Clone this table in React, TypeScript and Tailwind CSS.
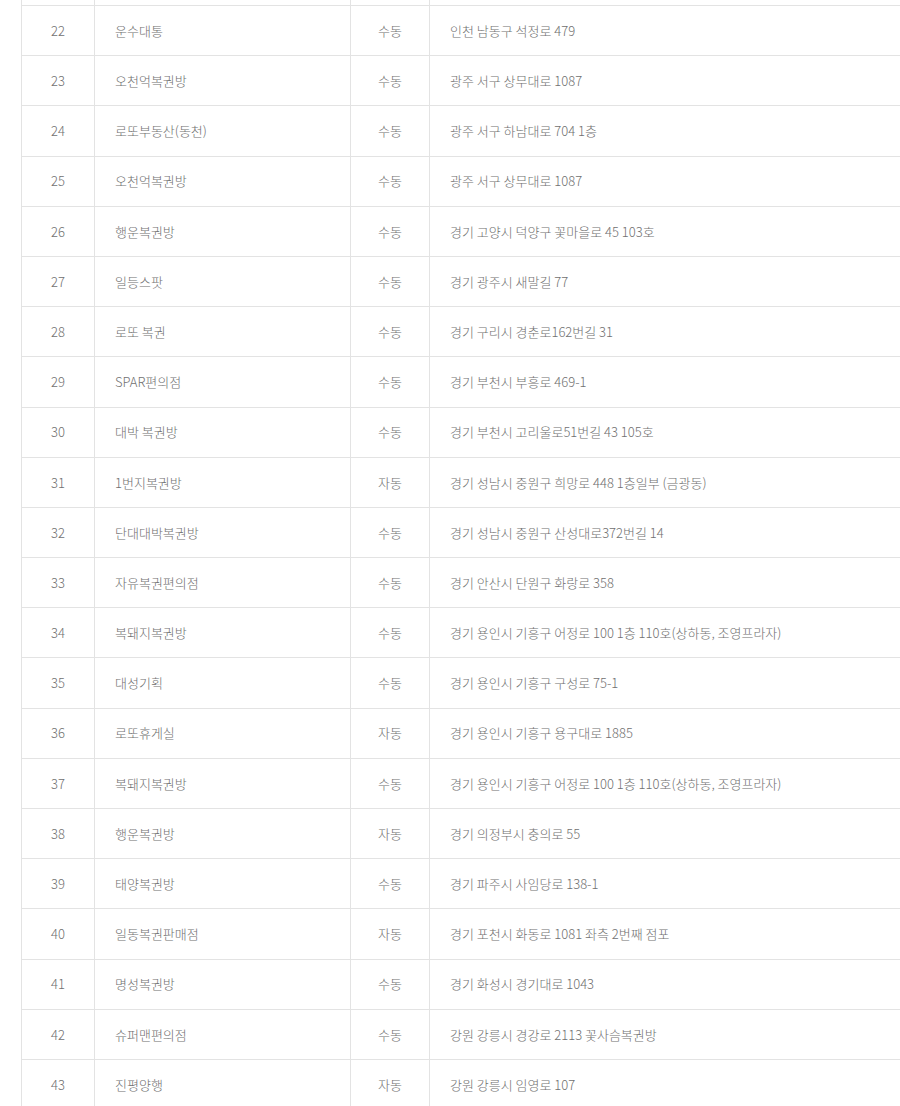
const rows: [number, string, string, string][] = [
  [22, "운수대통", "수동", "인천 남동구 석정로 479"],
  [23, "오천억복권방", "수동", "광주 서구 상무대로 1087"],
  [24, "로또부동산(동천)", "수동", "광주 서구 하남대로 704 1층"],
  [25, "오천억복권방", "수동", "광주 서구 상무대로 1087"],
  [26, "행운복권방", "수동", "경기 고양시 덕양구 꽃마을로 45 103호"],
  [27, "일등스팟", "수동", "경기 광주시 새말길 77"],
  [28, "로또 복권", "수동", "경기 구리시 경춘로162번길 31"],
  [29, "SPAR편의점", "수동", "경기 부천시 부흥로 469-1"],
  [30, "대박 복권방", "수동", "경기 부천시 고리울로51번길 43 105호"],
  [31, "1번지복권방", "자동", "경기 성남시 중원구 희망로 448 1층일부 (금광동)"],
  [32, "단대대박복권방", "수동", "경기 성남시 중원구 산성대로372번길 14"],
  [33, "자유복권편의점", "수동", "경기 안산시 단원구 화랑로 358"],
  [34, "복돼지복권방", "수동", "경기 용인시 기흥구 어정로 100 1층 110호(상하동, 조영프라자)"],
  [35, "대성기획", "수동", "경기 용인시 기흥구 구성로 75-1"],
  [36, "로또휴게실", "자동", "경기 용인시 기흥구 용구대로 1885"],
  [37, "복돼지복권방", "수동", "경기 용인시 기흥구 어정로 100 1층 110호(상하동, 조영프라자)"],
  [38, "행운복권방", "자동", "경기 의정부시 충의로 55"],
  [39, "태양복권방", "수동", "경기 파주시 사임당로 138-1"],
  [40, "일동복권판매점", "자동", "경기 포천시 화동로 1081 좌측 2번째 점포"],
  [41, "명성복권방", "수동", "경기 화성시 경기대로 1043"],
  [42, "슈퍼맨편의점", "수동", "강원 강릉시 경강로 2113 꽃사슴복권방"],
  [43, "진평양행", "자동", "강원 강릉시 임영로 107"],
];

const cols = "grid grid-cols-[72px_256px_79px_1fr]";

const App = () => {
  return (
    <div className="h-[1106px] w-[900px] overflow-hidden bg-white">
      <div
        className="ml-[21px] w-[879px] border-l border-[#e3e3e3] text-[13px] text-[#707070] font-light"
        style={{ fontFamily: '"Noto Sans CJK KR", "Noto Sans", sans-serif' }}
      >
        {/* 잘린 이전 행 */}
        <div className={`${cols} h-[5px]`}>
          <div />
          <div className="border-l border-[#e3e3e3]" />
          <div className="border-l border-[#e3e3e3]" />
          <div className="border-l border-[#e3e3e3]" />
        </div>
        {rows.map(([no, name, type, addr]) => (
          <div key={no} className={`${cols} h-[50.2px] border-t border-[#e3e3e3]`}>
            <div className="flex items-center justify-center">{no}</div>
            <div className="flex items-center border-l border-[#e3e3e3] pl-5">{name}</div>
            <div className="flex items-center justify-center border-l border-[#e3e3e3]">{type}</div>
            <div className="flex items-center border-l border-[#e3e3e3] pl-5 whitespace-nowrap">{addr}</div>
          </div>
        ))}
      </div>
    </div>
  );
};

export default App;
